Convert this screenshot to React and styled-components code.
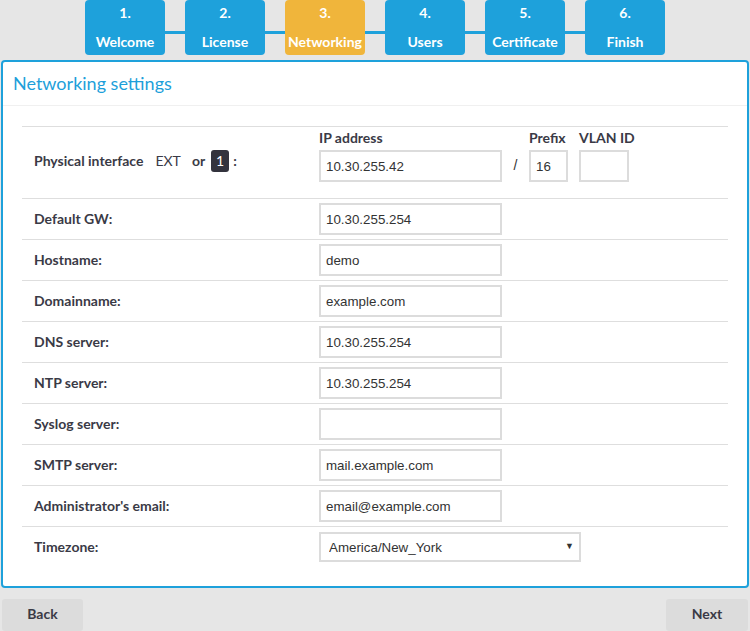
import React from "react";
import styled, { createGlobalStyle } from "styled-components";

const GlobalStyle = createGlobalStyle`
  body {
    margin: 0;
    background: #e6e6e6;
    font-family: Lato, "Open Sans", sans-serif;
    color: #3a3a46;
  }
  * { box-sizing: border-box; }
`;

const Page = styled.div`
  width: 750px;
  height: 631px;
  overflow: hidden;
`;

const Steps = styled.div`
  display: flex;
  justify-content: center;
`;

const Step = styled.div`
  width: 80px;
  height: 55px;
  border-radius: 4px;
  background: ${p => (p.active ? "#f0b53b" : "#1ea1db")};
  color: #fff;
  font-weight: 700;
  font-size: 14px;
  line-height: 17px;
  display: flex;
  flex-direction: column;
  justify-content: space-between;
  align-items: center;
  padding: 4px 0 5px;
  white-space: nowrap;
`;

const Connector = styled.div`
  width: 20px;
  height: 3px;
  margin-top: 31px;
  background: #1ea1db;
`;

const Panel = styled.div`
  margin: 5px 1px 0;
  border: 2px solid #1ea1db;
  border-radius: 4px;
  background: #fff;
`;

const PanelHeader = styled.div`
  height: 44px;
  padding-left: 10px;
  border-bottom: 1px solid #f0f0f0;
  font-size: 18px;
  line-height: 43px;
  color: #1e9fda;
`;

const PanelBody = styled.div`
  padding: 20px 19px 19px;
`;

const Row = styled.div`
  display: grid;
  grid-template-columns: 297px 1fr;
  align-items: center;
  height: ${p => (p.tall ? "72px" : "41px")};
  border-top: 1px solid #dedede;
`;

const Label = styled.div`
  padding: 0 0 ${p => (p.lift ? 4 : 2)}px 12px;
  font-size: 14px;
  font-weight: 700;
  display: flex;
  align-items: center;
`;

const Plain = styled.span`
  font-weight: 400;
  margin: 0 11px 0 12px;
`;

const Badge = styled.span`
  display: inline-flex;
  align-items: center;
  justify-content: center;
  width: 18px;
  height: 22px;
  margin: 0 4px 0 6px;
  border-radius: 3px;
  background: #33333d;
  color: #fff;
  font-weight: 400;
  font-size: 14px;
`;

const Field = styled.div`
  display: flex;
  align-items: center;
`;

const MultiField = styled.div`
  display: flex;
  padding: 4px 0 16px;
  align-self: stretch;
`;

const Group = styled.div`
  display: flex;
  flex-direction: column;
  margin-right: ${p => p.gap || 0}px;
`;

const GroupTitle = styled.div`
  height: 19px;
  font-size: 14px;
  font-weight: 700;
  line-height: 14px;
  white-space: nowrap;
`;

const Slash = styled.div`
  width: 27px;
  height: 32px;
  line-height: 30px;
  text-align: center;
  font-size: 14px;
  font-family: "Liberation Sans", Arial, sans-serif;
  color: #333;
`;

const Input = styled.input`
  width: ${p => p.w || 183}px;
  height: 32px;
  border: 2px solid #dcdcdc;
  padding: 0 5px;
  font-family: "Liberation Sans", Arial, sans-serif;
  font-size: 13.33px;
  color: #333;
  background: #fff;
  outline: none;
`;

const SelectWrap = styled.div`
  position: relative;
  width: 262px;
`;

const Select = styled.select`
  width: 262px;
  height: 30px;
  border: 2px solid #dcdcdc;
  padding: 0 8px;
  font-family: "Liberation Sans", Arial, sans-serif;
  font-size: 13.33px;
  color: #333;
  background: #fff;
  appearance: none;
  outline: none;
  border-radius: 0;
`;

const Arrow = styled.span`
  position: absolute;
  right: 7px;
  top: 8px;
  font-size: 9px;
  color: #333;
  pointer-events: none;
`;

const Footer = styled.div`
  display: flex;
  justify-content: space-between;
  padding: 11px 2px 0;
`;

const Button = styled.button`
  width: ${p => p.w}px;
  height: 32px;
  padding: 0 0 3px;
  border: none;
  border-radius: 3px;
  background: #dcdcdc;
  font-family: Lato, sans-serif;
  font-weight: 700;
  font-size: 14px;
  color: #3a3a46;
`;

const steps = ["Welcome", "License", "Networking", "Users", "Certificate", "Finish"];

const fields = [
  ["Default GW:", "10.30.255.254"],
  ["Hostname:", "demo"],
  ["Domainname:", "example.com"],
  ["DNS server:", "10.30.255.254"],
  ["NTP server:", "10.30.255.254"],
  ["Syslog server:", ""],
  ["SMTP server:", "mail.example.com"],
  ["Administrator's email:", "email@example.com"],
];

export default function App() {
  return (
    <Page>
      <GlobalStyle />
      <Steps>
        {steps.map((s, i) => (
          <React.Fragment key={s}>
            {i > 0 && <Connector />}
            <Step active={i === 2}>
              <span>{i + 1}.</span>
              <span>{s}</span>
            </Step>
          </React.Fragment>
        ))}
      </Steps>
      <Panel>
        <PanelHeader>Networking settings</PanelHeader>
        <PanelBody>
          <Row tall>
            <Label lift>
              Physical interface<Plain>EXT</Plain>or<Badge>1</Badge>:
            </Label>
            <MultiField>
              <Group>
                <GroupTitle>IP address</GroupTitle>
                <Input defaultValue="10.30.255.42" />
              </Group>
              <Group>
                <GroupTitle />
                <Slash>/</Slash>
              </Group>
              <Group gap={11}>
                <GroupTitle>Prefix</GroupTitle>
                <Input w={39} defaultValue="16" />
              </Group>
              <Group>
                <GroupTitle>VLAN ID</GroupTitle>
                <Input w={50} defaultValue="" />
              </Group>
            </MultiField>
          </Row>
          {fields.map(([label, value]) => (
            <Row key={label}>
              <Label>{label}</Label>
              <Field>
                <Input defaultValue={value} />
              </Field>
            </Row>
          ))}
          <Row>
            <Label>Timezone:</Label>
            <Field>
              <SelectWrap>
                <Select defaultValue="America/New_York">
                  <option>America/New_York</option>
                </Select>
                <Arrow>▼</Arrow>
              </SelectWrap>
            </Field>
          </Row>
        </PanelBody>
      </Panel>
      <Footer>
        <Button w={81}>Back</Button>
        <Button w={82}>Next</Button>
      </Footer>
    </Page>
  );
}
